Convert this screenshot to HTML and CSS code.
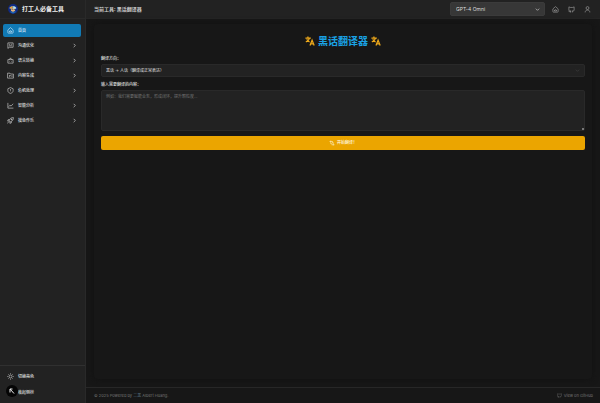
FILE: index.html
```html
<!DOCTYPE html>
<html lang="zh-CN">
<head>
<meta charset="utf-8">
<meta name="viewport" content="width=device-width, initial-scale=1">
<title>打工人必备工具</title>
<link rel="stylesheet" href="styles.css">
</head>
<body>
<svg class="sprite" aria-hidden="true">
  <symbol id="home" viewBox="0 0 24 24"><path d="M3 10 12 2l9 8v9a2 2 0 0 1-2 2H5a2 2 0 0 1-2-2zM8 17c0-6 8-6 8 0M8 17h8"/></symbol>
  <symbol id="chat" viewBox="0 0 24 24"><path d="M3 3h18v15H8l-5 4zM7 8h4M7 13h10M14 8h3"/></symbol>
  <symbol id="robot" viewBox="0 0 24 24"><path d="M3 9h18v12H3zM8 9l4-6 4 6M8 14v2M16 14v2"/></symbol>
  <symbol id="folder" viewBox="0 0 24 24"><path d="M2 4h8l2 3h10v14H2zM7 12h6M7 16h4M17 11v6"/></symbol>
  <symbol id="shield" viewBox="0 0 24 24"><path d="M12 2l9 4v7c0 5-5 8-9 9-4-1-9-4-9-9V6zM12 7v6M12 16v1"/></symbol>
  <symbol id="chart" viewBox="0 0 24 24"><path d="M3 3v18h19M6 16l4-5 4 3 7-8"/></symbol>
  <symbol id="rocket" viewBox="0 0 24 24"><path d="M7 14C8 6 14 2 22 2c0 8-4 14-12 15zM8 9H4l-2 5h5M15 16v4l-5 2v-5M14 7h3v3h-3zM5 17l-3 5"/></symbol>
  <symbol id="sun" viewBox="0 0 24 24"><circle cx="12" cy="12" r="5"/><path d="M12 1v3M12 20v3M1 12h3M20 12h3M4 4l2 2M18 18l2 2M4 20l2-2M18 6l2-2"/></symbol>
  <symbol id="github" viewBox="0 0 24 24"><path d="M9 17H6a3 3 0 0 1-3-3V3l5 2h8l5-2v11a3 3 0 0 1-3 3h-3M9 22v-6M15 22v-6M9 20c-4 1-4-2-7-2"/></symbol>
  <symbol id="user" viewBox="0 0 24 24"><circle cx="12" cy="7" r="5"/><path d="M4 22c0-5 3-8 8-8s8 3 8 8"/></symbol>
  <symbol id="chevron" viewBox="0 0 24 24"><path d="M8 4l8 8-8 8"/></symbol>
  <symbol id="down" viewBox="0 0 24 24"><path d="M4 8l8 8 8-8"/></symbol>
  <symbol id="translate" viewBox="0 0 24 24"><path d="M1 5h13M7 1v4M11 5c-1 4-4 7-9 9M4 8c2 3 4 5 7 6M12 23l5-13 5 13M14 19h6"/></symbol>
  <symbol id="swap" viewBox="0 0 24 24"><path d="M2 6h14M7 2v13h6M10 19h12M17 22V10h-5"/></symbol>
</svg>
<div class="app">
  <aside class="sidebar">
    <div class="brand">
      <svg class="logo" viewBox="0 0 24 24" aria-hidden="true"><circle cx="12" cy="12" r="12" fill="#102a83"/><path d="M4 9c2-6 14-6 16 0v3H4z" fill="#3d7ec4"/><path d="M4 8l7-3v6H4z" fill="#ef9d32"/><path d="M13 5l6 3-1 4h-6z" fill="#b9dfe8"/><path d="M7 11h10v5l-5 3-5-3z" fill="#e5b77d"/><path d="M6 17l6 3 6-3v3l-6 3-6-3z" fill="#2872b5"/><path d="M9 12h2v2H9zM14 12h2v2h-2z" fill="#172753"/></svg>
      <span>打工人必备工具</span>
    </div>
    <nav class="nav">
      <a class="item active" href="#"><svg class="icon"><use href="#home"/></svg><span>首页</span></a>
      <a class="item" href="#"><svg class="icon"><use href="#chat"/></svg><span>沟通优化</span><svg class="icon arrow"><use href="#chevron"/></svg></a>
      <a class="item" href="#"><svg class="icon"><use href="#robot"/></svg><span>语言转换</span><svg class="icon arrow"><use href="#chevron"/></svg></a>
      <a class="item" href="#"><svg class="icon"><use href="#folder"/></svg><span>内容生成</span><svg class="icon arrow"><use href="#chevron"/></svg></a>
      <a class="item" href="#"><svg class="icon"><use href="#shield"/></svg><span>危机处理</span><svg class="icon arrow"><use href="#chevron"/></svg></a>
      <a class="item" href="#"><svg class="icon"><use href="#chart"/></svg><span>智能分析</span><svg class="icon arrow"><use href="#chevron"/></svg></a>
      <a class="item" href="#"><svg class="icon"><use href="#rocket"/></svg><span>摸鱼作乐</span><svg class="icon arrow"><use href="#chevron"/></svg></a>
    </nav>
    <div class="tools">
      <button class="item" type="button"><svg class="icon"><use href="#sun"/></svg><span>切换亮色</span></button>
      <button class="item" type="button"><svg class="icon"></svg><span>收起侧栏</span></button>
      <span class="badge"><svg viewBox="0 0 24 24" aria-hidden="true"><path d="M8 15V8l8 9M8 8h5"/></svg></span>
    </div>
  </aside>
  <div class="page">
    <header class="topbar">
      <h2>当前工具: 黑话翻译器</h2>
      <div class="picker model">
        <select aria-label="模型"><option>GPT-4 Omni</option></select>
        <svg class="icon"><use href="#down"/></svg>
      </div>
      <a href="#" aria-label="首页"><svg class="icon"><use href="#home"/></svg></a>
      <a href="#" aria-label="GitHub"><svg class="icon"><use href="#github"/></svg></a>
      <a href="#" aria-label="用户"><svg class="icon"><use href="#user"/></svg></a>
    </header>
    <main class="main">
      <form class="card">
        <h1><svg class="icon"><use href="#translate"/></svg><span>黑话翻译器</span><svg class="icon"><use href="#translate"/></svg></h1>
        <label for="direction">翻译方向：</label>
        <div class="picker direction">
          <select id="direction"><option>黑话 → 人话（翻译成正常表达）</option></select>
          <svg class="icon"><use href="#down"/></svg>
        </div>
        <label for="content">输入需要翻译的内容：</label>
        <textarea id="content" placeholder="例如：我们需要赋能业务，形成闭环，提升颗粒度..."></textarea>
        <button class="submit" type="button"><svg class="icon"><use href="#swap"/></svg><span>开始翻译！</span></button>
      </form>
    </main>
    <footer class="footer">
      <span>© 2025 Powered by <a class="author" href="#">二黑</a> Albert Huang.</span>
      <a href="#"><svg class="icon"><use href="#github"/></svg>View on GitHub</a>
    </footer>
  </div>
</div>
</body>
</html>
```
FILE: styles.css
```css
* { box-sizing: border-box; }
body {
  margin: 0;
  background: #171717;
  color: #e0e0e0;
  font: 4px/6px Inter, "Noto Sans CJK SC", sans-serif;
}
a { color: inherit; text-decoration: none; }
button, select, textarea { font: inherit; color: inherit; }
.sprite { position: absolute; width: 0; height: 0; }
.icon {
  flex: none;
  width: 7px;
  height: 7px;
  fill: none;
  stroke: currentColor;
  stroke-width: 2;
}
.app {
  display: grid;
  grid-template-columns: 86px 1fr;
  min-height: 100vh;
}
.sidebar {
  display: flex;
  flex-direction: column;
  background: #222;
  border-right: 1px solid #292929;
}
.brand {
  display: flex;
  align-items: center;
  gap: 4px;
  height: 19px;
  padding-left: 8px;
  border-bottom: 1px solid #292929;
  color: #eee;
  font-size: 6px;
  font-weight: 600;
  line-height: 8px;
  white-space: nowrap;
}
.logo { flex: none; width: 10px; height: 10px; }
.nav {
  display: flex;
  flex-direction: column;
  gap: 2px;
  padding: 5px 4px 5px 3px;
}
.item {
  display: flex;
  align-items: center;
  gap: 4px;
  height: 13px;
  padding: 0 3px 0 4px;
  border: 0;
  border-radius: 2px;
  background: none;
  font-weight: 500;
}
.active { background: #117ab5; color: #e4f4ff; }
.arrow { width: 5px; height: 5px; margin-left: auto; margin-right: 1px; stroke-width: 3; }
.tools {
  position: relative;
  display: flex;
  flex-direction: column;
  gap: 3px;
  margin-top: auto;
  padding: 4px 4px 4px 3px;
  border-top: 1px solid #303030;
}
.badge {
  position: absolute;
  left: 6px;
  bottom: 6px;
  width: 12px;
  height: 12px;
  border-radius: 50%;
  background: #050505;
}
.badge svg { display: block; fill: none; stroke: #eee; stroke-width: 2; }
.page { display: flex; flex-direction: column; min-width: 0; }
.topbar {
  display: flex;
  align-items: center;
  gap: 9px;
  height: 19px;
  padding: 0 9px 0 8px;
  background: #222;
  border-bottom: 1px solid #252525;
  color: #aaa;
}
.topbar a { display: flex; }
.topbar h2 {
  margin: 0 auto 0 0;
  color: #ccc;
  font-size: 5px;
  font-weight: 600;
}
.picker { display: grid; align-items: center; }
.picker select, .picker .icon { grid-area: 1 / 1; }
.picker select {
  width: 100%;
  height: 100%;
  padding: 0 4px;
  border: 1px solid #292929;
  border-radius: 2px;
  background: #222;
  appearance: none;
}
.picker .icon {
  justify-self: end;
  width: 5px;
  height: 5px;
  margin-right: 5px;
  pointer-events: none;
}
.model { flex: 0 1 95px; height: 14px; margin-right: -2px; color: #ddd; }
.model select { padding: 0 5px; background: #373737; border-color: #3b3b3b; font-size: 5px; }
.model .icon { stroke-width: 3; }
.main { flex: 1; padding: 5px 8px 8px; }
.card {
  display: flex;
  flex-direction: column;
  height: 100%;
  padding: 9px 7px;
  border-radius: 4px;
  box-shadow: 0 0 6px #111;
}
.card h1 {
  display: flex;
  align-items: center;
  justify-content: center;
  gap: 3px;
  margin: 0 0 7px;
  color: #1aa2e5;
  font-size: 10px;
  font-weight: 700;
  line-height: 16px;
}
.card h1 .icon { width: 10px; height: 10px; color: #eea91b; stroke-width: 3; }
.card label { margin-bottom: 2px; font-weight: 500; }
.direction { height: 13px; margin-bottom: 5px; }
.direction .icon { color: #555; }
.card textarea {
  display: block;
  width: 100%;
  height: 41px;
  padding: 3px 4px;
  border: 1px solid #292929;
  border-radius: 2px;
  background: #222;
  resize: vertical;
}
.card textarea::placeholder { color: #737373; }
.card textarea::-webkit-resizer {
  background: linear-gradient(#777, #777) 100% 100% / 2px 2px no-repeat;
}
.submit {
  display: flex;
  align-items: center;
  justify-content: center;
  gap: 2px;
  height: 14px;
  margin-top: 5px;
  padding: 0;
  border: 0;
  border-radius: 2px;
  background: #eba500;
  color: #fff8e0;
  font-weight: 500;
}
.submit .icon { width: 6px; height: 6px; }
.footer {
  display: flex;
  align-items: center;
  justify-content: space-between;
  height: 16px;
  padding: 0 7px 0 8px;
  border-top: 1px solid #272727;
  color: #747474;
}
.footer > a { display: flex; align-items: center; gap: 2px; }
.footer .icon { width: 5px; height: 5px; }
.author { color: #557080; }
```
